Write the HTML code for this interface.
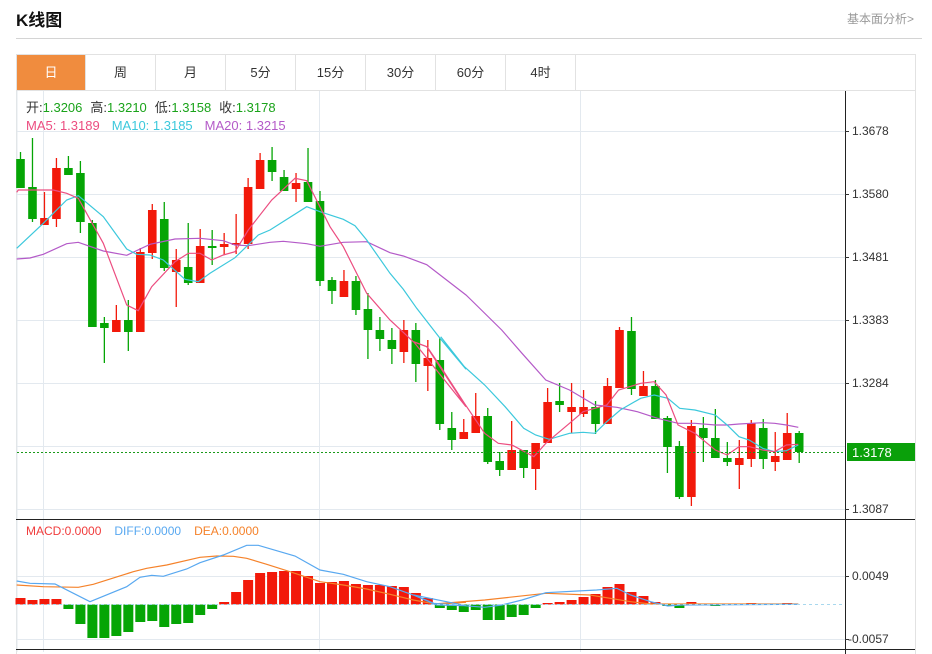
<!DOCTYPE html>
<html><head><meta charset="utf-8">
<style>
html,body{margin:0;padding:0;background:#fff;width:932px;height:654px;overflow:hidden;font-family:"Liberation Sans","Noto Sans CJK SC",sans-serif;}
.t{position:absolute;left:16px;top:6px;font-size:17px;font-weight:bold;color:#111;}
.r{position:absolute;right:18px;top:10px;font-size:12px;color:#999;}
.hl{position:absolute;left:16px;top:38px;width:906px;height:1px;background:#d4d4d4;}
.frame{position:absolute;left:16px;top:54px;width:900px;height:600px;border:1px solid #e2e2e2;border-bottom:none;box-sizing:border-box;}
.tabs{position:absolute;left:16px;top:54px;height:37px;width:900px;border-bottom:1px solid #e2e2e2;box-sizing:border-box;}
.tab{position:absolute;top:1px;height:35px;width:70px;line-height:35px;text-align:center;font-size:13px;color:#333;border-right:1px solid #e2e2e2;box-sizing:border-box;}
svg{position:absolute;left:0;top:0;}
</style></head><body>
<div class="t">K线图</div>
<div class="r">基本面分析&gt;</div>
<div class="hl"></div>
<div class="frame"></div>
<div class="tabs">
<div class="tab" style="left:1px;width:69px;background:#f08c3e;color:#fff">日</div>
<div class="tab" style="left:70px">周</div>
<div class="tab" style="left:140px">月</div>
<div class="tab" style="left:210px">5分</div>
<div class="tab" style="left:280px">15分</div>
<div class="tab" style="left:350px">30分</div>
<div class="tab" style="left:420px">60分</div>
<div class="tab" style="left:490px">4时</div>
</div>
<svg id="s" width="932" height="654" xmlns="http://www.w3.org/2000/svg" font-family="Liberation Sans, Noto Sans CJK SC, sans-serif">
<g stroke="#e3e9ef" stroke-width="1">
<line x1="17" y1="131.5" x2="845" y2="131.5"/><line x1="17" y1="194.5" x2="845" y2="194.5"/><line x1="17" y1="257.5" x2="845" y2="257.5"/><line x1="17" y1="320.5" x2="845" y2="320.5"/><line x1="17" y1="383.5" x2="845" y2="383.5"/><line x1="17" y1="446.5" x2="845" y2="446.5"/><line x1="17" y1="509.5" x2="845" y2="509.5"/>
<line x1="17" y1="576.5" x2="845" y2="576.5"/><line x1="17" y1="639.5" x2="845" y2="639.5"/>
<line x1="43.5" y1="91" x2="43.5" y2="652"/><line x1="319.5" y1="91" x2="319.5" y2="652"/><line x1="580.5" y1="91" x2="580.5" y2="652"/>
<line x1="17" y1="91" x2="17" y2="652"/>
</g>
<line x1="845.5" y1="91" x2="845.5" y2="654" stroke="#222"/>
<line x1="16" y1="519.5" x2="915" y2="519.5" stroke="#222"/>
<line x1="16" y1="649.5" x2="915" y2="649.5" stroke="#222"/>
<g id="cd"></g>
<line x1="17" y1="452.5" x2="845" y2="452.5" stroke="#1a9a1a" stroke-dasharray="2,2"/>
<line x1="17" y1="604.5" x2="845" y2="604.5" stroke="#a8d8ee" stroke-dasharray="3,3"/>
<g font-size="12" fill="#333">
<text x="852" y="135">1.3678</text><text x="852" y="198">1.3580</text><text x="852" y="261">1.3481</text><text x="852" y="324">1.3383</text><text x="852" y="387">1.3284</text><text x="852" y="513">1.3087</text>
<text x="852" y="580">0.0049</text><text x="848" y="643">-0.0057</text>
</g>
<g stroke="#333"><line x1="845" y1="131.5" x2="849" y2="131.5"/><line x1="845" y1="194.5" x2="849" y2="194.5"/><line x1="845" y1="257.5" x2="849" y2="257.5"/><line x1="845" y1="320.5" x2="849" y2="320.5"/><line x1="845" y1="383.5" x2="849" y2="383.5"/><line x1="845" y1="509.5" x2="849" y2="509.5"/><line x1="845" y1="576.5" x2="849" y2="576.5"/><line x1="845" y1="639.5" x2="849" y2="639.5"/></g>
<rect x="847" y="443" width="68" height="18" fill="#0aa00a"/>
<text x="852" y="457" font-size="13" fill="#fff">1.3178</text>
<g font-size="13">
<text x="26" y="112"><tspan fill="#333">开:</tspan><tspan fill="#1aa31a">1.3206</tspan><tspan fill="#333" dx="8">高:</tspan><tspan fill="#1aa31a">1.3210</tspan><tspan fill="#333" dx="8">低:</tspan><tspan fill="#1aa31a">1.3158</tspan><tspan fill="#333" dx="8">收:</tspan><tspan fill="#1aa31a">1.3178</tspan></text>
<text x="26" y="130"><tspan fill="#ec4d80">MA5: 1.3189</tspan><tspan fill="#3cc8dc" dx="12">MA10: 1.3185</tspan><tspan fill="#b45ac8" dx="12">MA20: 1.3215</tspan></text>
</g>
<text x="26" y="535" font-size="12"><tspan fill="#f03c3c">MACD:0.0000</tspan><tspan fill="#58a8f0" dx="13">DIFF:0.0000</tspan><tspan fill="#f5822a" dx="13">DEA:0.0000</tspan></text>
</svg>
<script>
var C=[
[159,188,152,188,0],[187,219,138,222,0],[218,225,192,225,1],[168,219,158,227,1],[168,175,156,175,0],[173,222,161,233,0],
[223,327,220,327,0],[323,328,317,363,0],[320,332,305,332,1],[320,332,300,351,0],[252,332,248,332,1],[210,253,204,259,1],
[219,268,202,271,0],[260,272,249,307,1],[267,283,223,285,0],[246,283,229,283,1],[246,248,230,265,0],[244,247,233,255,1],
[243,245,214,254,1],[187,244,178,249,1],[160,189,153,189,1],[160,172,147,181,0],[177,191,170,191,0],[183,189,173,202,1],
[182,202,148,202,0],[201,281,191,286,0],[280,291,277,304,0],[281,297,270,297,1],[281,310,276,315,0],[309,330,293,359,0],
[330,339,317,351,0],[340,349,328,364,0],[330,352,320,363,1],[330,364,323,382,0],[358,366,340,391,1],[360,424,338,430,0],
[428,440,412,450,0],[432,439,419,439,1],[416,433,393,433,1],[416,462,408,464,0],[461,470,452,476,0],[450,470,421,470,1],
[450,468,450,478,0],[443,469,443,490,1],[402,443,388,443,1],[401,405,383,412,0],[407,412,383,433,1],[407,414,390,417,1],
[407,424,401,434,0],[386,424,378,424,1],[330,388,327,388,1],[331,389,317,395,0],[386,396,371,396,1],[386,419,380,419,0],
[418,447,416,473,0],[446,497,441,499,0],[426,497,420,506,1],[428,438,417,462,0],[438,458,409,458,0],[458,462,442,466,0],
[458,465,440,489,1],[423,459,420,467,1],[428,459,419,469,0],[456,462,432,471,1],[433,460,413,460,1],[433,452,431,463,0]];
var H=[598,600,599,599,609,624,638,638,636,632,622,621,627,624,623,615,609,602,592,580,573,572,571,571,576,583,582,581,584,585,585,586,587,593,598,608,610,612,610,620,620,617,615,608,603,602,600,597,594,587,584,592,596,602,606,608,602,604,606,604,604,603,604,604,603,604];
var R="#f2190a",G="#05a505",s="";
function X(i){return 20.5+11.98*i;}
for(var i=0;i<C.length;i++){var c=C[i],x=X(i),col=c[4]?R:G;
s+='<line x1="'+x+'" y1="'+c[2]+'" x2="'+x+'" y2="'+c[3]+'" stroke="'+col+'" stroke-width="1.3"/>';
s+='<rect x="'+(x-4.3)+'" y="'+c[0]+'" width="8.6" height="'+Math.max(c[1]-c[0],2)+'" fill="'+col+'"/>';}
for(var i=0;i<H.length;i++){var x=X(i),h=H[i],z=604.5;if(Math.abs(h-z)<1.2)continue;
s+='<rect x="'+(x-5)+'" y="'+Math.min(h,z)+'" width="10" height="'+Math.abs(h-z)+'" fill="'+(h<z?R:G)+'"/>';}
function P(a,ox,oy,sc){var o=[];for(var i=0;i<a.length;i++)o.push((a[i][0]/sc+ox).toFixed(1)+','+(a[i][1]/3+oy).toFixed(1));return o.join(' ');}
function L(a1,a2,col,oy1,oy2){return '<polyline fill="none" stroke="'+col+'" stroke-width="1.2" points="'+P(a1,0,oy1,3)+' '+P(a2,400,oy2,2.95)+'"/>';}
var m5a=[[50,187],[55,180],[160,180],[200,190],[235,205],[310,340],[380,525],[415,542],[455,470],[525,395],[565,370],[600,370],[635,390],[670,375],[705,365],[745,300],[815,210],[885,145],[920,152],[990,290],[1030,350],[1100,490],[1170,570],[1240,635],[1280,650],[1398,830]];
var m5b=[[40,125],[80,140],[120,200],[190,310],[250,400],[290,430],[330,435],[395,470],[430,430],[465,400],[500,370],[540,335],[575,325],[610,315],[645,270],[710,250],[750,245],[785,285],[820,375],[870,400],[930,450],[965,465],[1000,440],[1030,440],[1070,450],[1105,455],[1140,435],[1175,433]];
var m10a=[[50,355],[130,280],[200,210],[235,197],[310,260],[380,357],[410,373],[450,375],[490,390],[555,448],[595,455],[630,430],[705,383],[775,315],[810,300],[920,230],[960,245],[1030,268],[1065,287],[1100,330],[1170,430],[1210,478],[1250,535],[1320,625],[1398,718]];
var m10b=[[120,110],[190,200],[250,255],[310,320],[365,385],[400,405],[440,418],[500,400],[540,397],[575,400],[610,365],[650,330],[710,295],[750,285],[790,295],[825,325],[870,330],[930,345],[965,375],[1000,410],[1030,420],[1070,445],[1105,455],[1140,452],[1175,435]];
var m20a=[[50,387],[90,384],[130,373],[200,341],[235,337],[310,363],[380,376],[450,343],[525,327],[600,325],[670,332],[705,345],[745,347],[810,337],[850,334],[920,341],[960,349],[1030,337],[1100,335],[1170,368],[1210,378],[1280,404],[1398,495]];
var m20b=[[210,0],[300,90],[360,160],[430,240],[500,270],[575,315],[640,322],[700,335],[760,355],[820,370],[870,370],[930,375],[965,375],[1000,372],[1070,368],[1105,370],[1140,375],[1175,382]];
s+=L(m20a,m20b,"#b45ac8",130,300)+L(m10a,m10b,"#3cc8dc",130,300)+L(m5a,m5b,"#ec4d80",130,300);
var da=[[50,198],[90,205],[165,207],[270,260],[380,215],[420,187],[455,181],[490,184],[560,162],[600,143],[670,120],[740,91],[775,91],[885,123],[960,165],[1030,178],[1100,200],[1170,215],[1240,240],[1310,270],[1398,272]];
var db=[[40,885],[100,910],[250,922],[300,915],[360,900],[430,878],[580,870],[640,865],[680,885],[740,905],[790,918],[830,915],[1175,913]];
var ea=[[50,210],[130,215],[235,217],[280,208],[400,170],[440,160],[500,150],[600,127],[650,123],[700,124],[740,130],[800,148],[870,170],[960,200],[1030,210],[1100,222],[1170,238],[1240,255],[1310,268],[1398,262]];
var eb=[[100,912],[250,900],[430,880],[560,885],[620,895],[680,905],[740,912],[1175,912]];
s+=L(ea,eb,"#f5822a",515,300)+L(da,db,"#58a8f0",515,300);
document.getElementById("cd").innerHTML=s;
</script>
</body></html>
